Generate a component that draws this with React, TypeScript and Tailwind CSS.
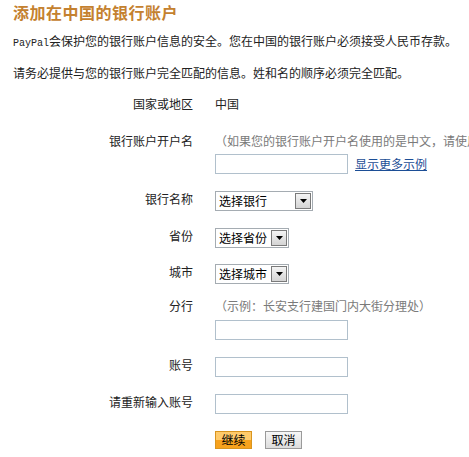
const cjk = { fontFamily: '"SimSun", "Noto Sans CJK SC", sans-serif' }

function FakeSelect({ label, width }: { label: string; width: string }) {
  return (
    <div className={`flex h-[20px] ${width} items-center justify-between border border-[#a5acb2] bg-white pl-[3px] pr-[1px]`}>
      <span className="text-[12px] leading-none text-black">{label}</span>
      <span className="flex h-[16px] w-[16px] items-center justify-center border border-[#7a7a7a] bg-gradient-to-b from-[#f4f4f4] to-[#d4d4d4]">
        <svg width="7" height="4" viewBox="0 0 7 4">
          <polygon points="0,0 7,0 3.5,4" fill="#000" />
        </svg>
      </span>
    </div>
  )
}

function Row({ label, className, children }: { label: string; className?: string; children?: React.ReactNode }) {
  return (
    <div className={`flex ${className ?? ""}`}>
      <div className="w-[180px] shrink-0 text-right">{label}</div>
      <div className="ml-[22px] min-w-0 flex-1">{children}</div>
    </div>
  )
}

const inputCls = "block h-[20px] w-[133px] border border-[#b1c0cc] bg-white"

export default function App() {
  return (
    <div className="h-[457px] w-[469px] overflow-hidden bg-white pl-[13px] pt-[2px] text-[12px] leading-[16px] text-[#222]" style={cjk}>
      <h1 className="text-[16px] font-bold leading-[20px] tracking-[0.5px] text-[#c4812f]">添加在中国的银行账户</h1>

      <p className="mt-[11px] whitespace-nowrap">
        <span className="text-[10px]" style={{ fontFamily: '"Liberation Mono", monospace' }}>PayPal</span>
        会保护您的银行账户信息的安全。您在中国的银行账户必须接受人民币存款。
      </p>
      <p className="mt-[13px] whitespace-nowrap">
        请务必提供与您的银行账户完全匹配的信息。姓和名的顺序必须完全匹配。
      </p>

      <Row label="国家或地区" className="mt-[15px]">
        <span>中国</span>
      </Row>

      <Row label="银行账户开户名" className="mt-[21px]">
        <div className="whitespace-nowrap text-[#7a7a7a]">
          （如果您的银行账户开户名使用的是中文，请使用中文填写。）
        </div>
        <div className="mt-[5px] flex items-center">
          <input className={inputCls} />
          <a href="#" className="ml-[7px] text-[#1c4e96] underline">显示更多示例</a>
        </div>
      </Row>

      <Row label="银行名称" className="mt-[17px]">
        <FakeSelect label="选择银行" width="w-[98px]" />
      </Row>

      <Row label="省份" className="mt-[17px]">
        <FakeSelect label="选择省份" width="w-[74px]" />
      </Row>

      <Row label="城市" className="mt-[16px]">
        <FakeSelect label="选择城市" width="w-[74px]" />
      </Row>

      <Row label="分行" className="mt-[14px]">
        <div className="whitespace-nowrap text-[#7a7a7a]">（示例：长安支行建国门内大街分理处）</div>
        <input className={`${inputCls} mt-[6px]`} />
      </Row>

      <Row label="账号" className="mt-[17px]">
        <input className={inputCls} />
      </Row>

      <Row label="请重新输入账号" className="mt-[17px]">
        <input className={inputCls} />
      </Row>

      <Row label="" className="mt-[17px]">
        <div className="flex gap-[13px]">
          <button className="h-[18px] w-[37px] border border-[#d9951f] bg-gradient-to-b from-[#ffcb6c] from-50% to-[#f7a21d] to-50% leading-none text-black">
            继续
          </button>
          <button className="h-[18px] w-[37px] border border-[#9a9a9a] bg-gradient-to-b from-[#f7f7f7] to-[#dcdcdc] leading-none text-black">
            取消
          </button>
        </div>
      </Row>
    </div>
  )
}
